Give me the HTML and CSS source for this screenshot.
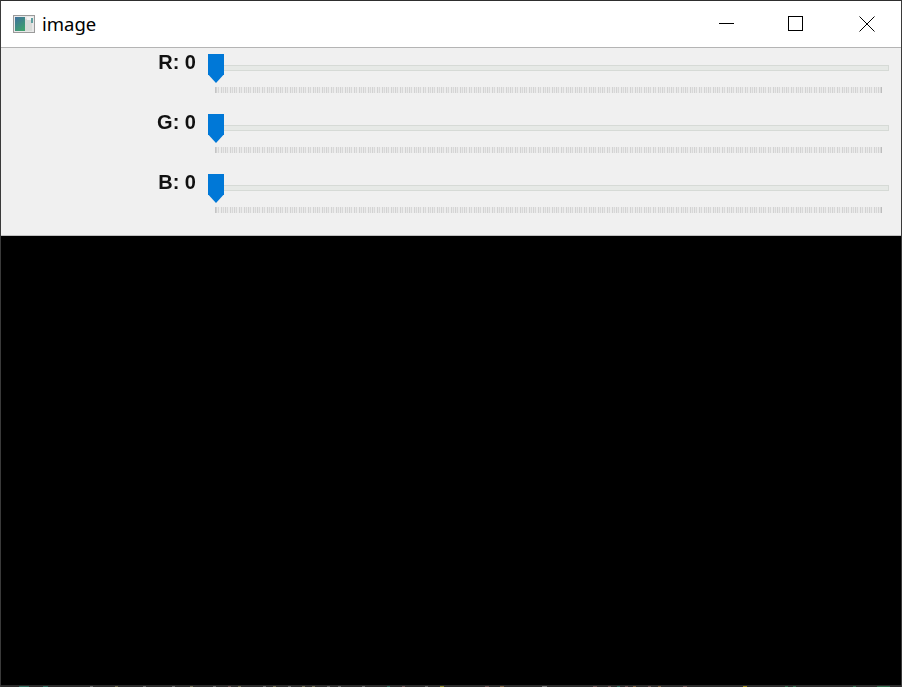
FILE: index.html
```html
<!DOCTYPE html>
<html lang="en">
<head>
  <meta charset="UTF-8" />
  <title>image</title>
  <link rel="stylesheet" href="styles.css">
</head>
<body>
  <div class="window">
    <!-- Title bar -->
    <div class="titlebar">
      <svg class="app-icon" width="22" height="18" viewBox="0 0 22 18">
        <defs>
          <linearGradient id="pic" x1="0" y1="0" x2="0.6" y2="1">
            <stop offset="0" stop-color="#3f6f9e" />
            <stop offset="1" stop-color="#3fa06f" />
          </linearGradient>
        </defs>
        <rect x="0.5" y="0.5" width="21" height="17" fill="#e8e8e8" stroke="#9a9a9a" />
        <rect x="2" y="2" width="10" height="14" fill="url(#pic)" />
        <rect x="12" y="4" width="7" height="12" fill="#d9dcd9" />
        <rect x="14" y="2" width="6" height="3" fill="#f4f4f4" />
        <rect x="18" y="3" width="2" height="5" fill="#5f9fa0" />
      </svg>
      <span class="title">image</span>
      <div class="controls">
        <svg class="min" width="15" height="16" viewBox="0 0 15 16"><path d="M0 7.5H15" stroke="#000" fill="none" /></svg>
        <svg width="16" height="16" viewBox="0 0 16 16"><rect x="0.5" y="0.5" width="14" height="14" stroke="#000" fill="none" /></svg>
        <svg width="16" height="16" viewBox="0 0 16 16"><path d="M0.5 0.5L15.5 15.5M15.5 0.5L0.5 15.5" stroke="#000" fill="none" /></svg>
      </div>
    </div>

    <!-- Trackbars -->
    <div class="panel">
      <div class="row">
        <span class="label">R: 0</span>
        <div class="slider">
          <div class="track"></div>
          <div class="thumb"></div>
          <div class="ticks"></div>
        </div>
      </div>
      <div class="row">
        <span class="label">G: 0</span>
        <div class="slider">
          <div class="track"></div>
          <div class="thumb"></div>
          <div class="ticks"></div>
        </div>
      </div>
      <div class="row">
        <span class="label">B: 0</span>
        <div class="slider">
          <div class="track"></div>
          <div class="thumb"></div>
          <div class="ticks"></div>
        </div>
      </div>
    </div>

    <div class="canvas"></div>
    <div class="edge"></div>
  </div>
</body>
</html>
```

FILE: styles.css
```css
html, body {
  margin: 0;
  padding: 0;
  background: #000;
}

.window {
  width: 902px;
  height: 687px;
  box-sizing: border-box;
  display: flex;
  flex-direction: column;
  border-top: 1px solid #2e2e2e;
  border-left: 1px solid #3a3a3a;
  border-right: 1px solid #3a3a3a;
  overflow: hidden;
}

.titlebar {
  height: 46px;
  flex: none;
  display: flex;
  align-items: center;
  background: #fff;
  border-bottom: 1px solid #b4b4b4;
  padding-left: 12px;
}

.app-icon {
  margin-right: 7px;
}

.title {
  font-family: "Noto Sans", sans-serif;
  font-size: 18.5px;
  color: #000;
  margin-bottom: 2px;
}

.controls {
  margin-left: auto;
  display: flex;
  gap: 55px;
  margin-right: 26px;
}

.min {
  margin-right: -1px;
}

.panel {
  height: 188px;
  flex: none;
  box-sizing: border-box;
  background: #f0f0f0;
  border-bottom: 1px solid #c0c0c0;
  padding-top: 6px;
}

.row {
  height: 60px;
  display: flex;
}

.label {
  width: 195px;
  height: 20px;
  margin-top: -2px;
  text-align: right;
  font-family: "Liberation Sans", sans-serif;
  font-weight: bold;
  font-size: 20px;
  line-height: 20px;
  color: #111;
  filter: blur(0.4px);
}

.slider {
  position: relative;
  margin-left: 12px;
  width: 681px;
  height: 60px;
}

.track {
  position: absolute;
  left: 8px;
  top: 11px;
  right: 0;
  height: 6px;
  box-sizing: border-box;
  background: #e6e9e6;
  border: 1px solid #d6dad6;
}

.thumb {
  position: absolute;
  left: 0;
  top: 0;
  width: 16px;
  height: 29px;
  background: #0078d7;
  clip-path: polygon(0 0, 100% 0, 100% 70%, 50% 100%, 0 70%);
  filter: blur(0.3px);
}

.ticks {
  position: absolute;
  left: 7px;
  top: 33px;
  width: 667px;
  height: 6px;
  background: repeating-linear-gradient(90deg, #d2d2d2 0 1px, #e8e8e8 1px 2px, #d8d8d8 2px 3px, #ececec 3px 4.6px);
  border-left: 1px solid #c4c4c4;
  border-right: 1px solid #bcbcbc;
  box-sizing: border-box;
  filter: blur(0.5px);
}

.canvas {
  flex: 1;
  background: #000;
}

/* bit of the desktop showing under the window */
.edge {
  height: 2px;
  flex: none;
  background-color: #2c2c2c;
  background-image: linear-gradient(90deg,
    #2c2c2c 0 18px, #2f6a5c 18px 28px, #2c2c2c 28px 42px, #2f6a5c 42px 47px, #2c2c2c 47px 89px,
    #666 89px 92px, #2c2c2c 92px 114px, #6e6a4c 114px 117px, #2c2c2c 117px 142px, #666 142px 145px,
    #2c2c2c 145px 171px, #666 171px 174px, #2c2c2c 174px 189px, #6e6a4c 189px 192px, #2c2c2c 192px 212px,
    #666 212px 215px, #2c2c2c 215px 227px, #6a5050 227px 230px, #2c2c2c 230px 237px, #6e6a4c 237px 240px,
    #2c2c2c 240px 262px, #666 262px 265px, #2c2c2c 265px 272px, #6e6a4c 272px 275px, #2c2c2c 275px 287px,
    #666 287px 290px, #2c2c2c 290px 301px, #6e6a4c 301px 304px, #2c2c2c 304px 311px, #6e6a4c 311px 314px,
    #2c2c2c 314px 326px, #666 326px 329px, #2c2c2c 329px 337px, #666 337px 340px, #2c2c2c 340px 361px,
    #666 361px 364px, #2c2c2c 364px 386px, #2f6a5c 386px 389px, #2c2c2c 389px 401px, #6a5050 401px 404px,
    #2c2c2c 404px 424px, #666 424px 427px, #2c2c2c 427px 439px, #8a8420 439px 443px, #2c2c2c 443px 484px,
    #6a5050 484px 488px, #2c2c2c 488px 499px, #7a5c3c 499px 503px, #2c2c2c 503px 541px, #777 541px 546px,
    #2c2c2c 546px 592px, #6a5050 592px 596px, #2c2c2c 596px 607px, #6a5050 607px 610px, #2c2c2c 610px 616px,
    #2f6a5c 616px 619px, #2c2c2c 619px 624px, #6a5050 624px 627px, #2c2c2c 627px 632px, #7a5c3c 632px 635px,
    #2c2c2c 635px 647px, #6a5050 647px 650px, #2c2c2c 650px 657px, #7a5c3c 657px 660px, #2c2c2c 660px 682px,
    #6a5050 682px 686px, #2c2c2c 686px 742px, #a08a18 742px 746px, #2c2c2c 746px 784px, #2f6a4a 784px 787px,
    #2c2c2c 787px 792px, #2f6a4a 792px 795px, #2c2c2c 795px 852px, #2f6a4a 852px 855px, #2c2c2c 855px 876px,
    #2f6a4a 876px 889px, #2c2c2c 889px);
  background-size: 100% 1px;
  background-position: 0 100%;
  background-repeat: no-repeat;
}
```
